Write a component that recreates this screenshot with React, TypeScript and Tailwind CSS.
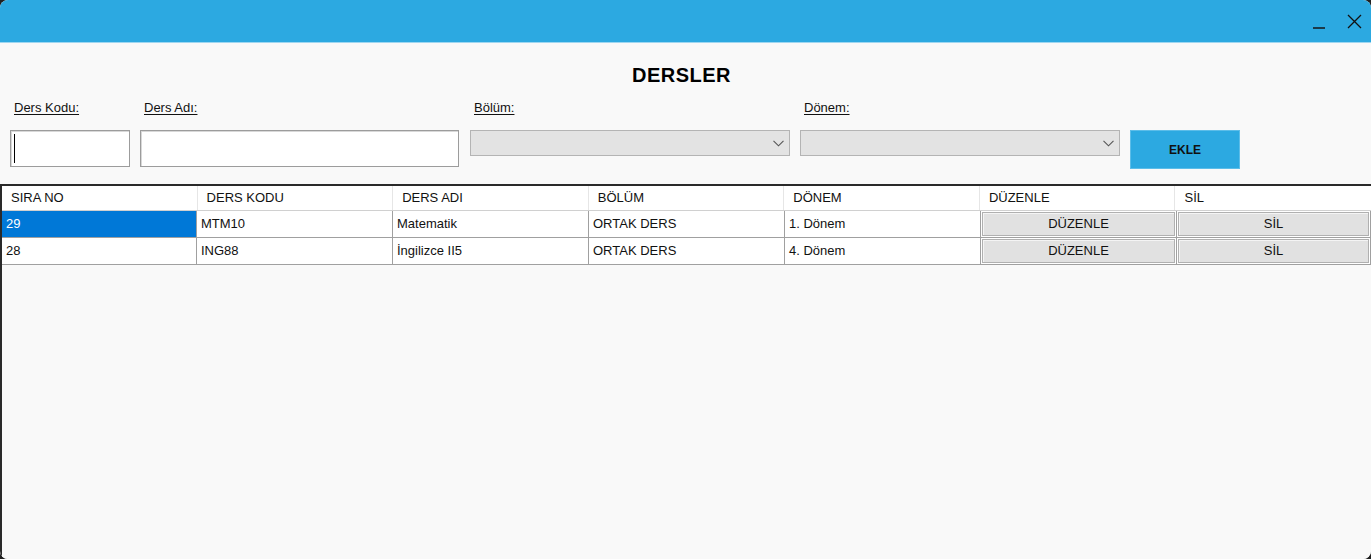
import React from "react";

const font = { fontFamily: '"Liberation Sans", Arial, sans-serif' };

const cols = ["SIRA NO", "DERS KODU", "DERS ADI", "BÖLÜM", "DÖNEM", "DÜZENLE", "SİL"];
const rows = [
  { no: "29", kod: "MTM10", ad: "Matematik", bolum: "ORTAK DERS", donem: "1. Dönem" },
  { no: "28", kod: "ING88", ad: "İngilizce II5", bolum: "ORTAK DERS", donem: "4. Dönem" },
];

function Chevron() {
  return (
    <svg width="11" height="7" viewBox="0 0 11 7" fill="none">
      <path d="M0.5 0.8 L5.5 5.8 L10.5 0.8" stroke="#555" strokeWidth="1.1" />
    </svg>
  );
}

function Combo({ w }: { w: string }) {
  return (
    <div className={`${w} h-[26px] bg-[#e3e3e3] border border-[#b4b4b4] flex items-center justify-end pr-[5px]`}>
      <Chevron />
    </div>
  );
}

function Label({ text }: { text: string }) {
  return (
    <div className="pl-1 h-4 text-[13px] leading-4 text-[#111] underline underline-offset-2 decoration-1">{text}</div>
  );
}

function GridButton({ text }: { text: string }) {
  return (
    <div className="flex-1 h-full p-px">
      <div className="w-full h-full bg-[#e1e1e1] border border-[#b0b0b0] shadow-[inset_1px_1px_0_#f4f4f4] flex items-center justify-center text-[13px] text-[#111]">
        {text}
      </div>
    </div>
  );
}

export default function App() {
  return (
    <div className="w-[1371px] h-[559px] bg-[#202020] overflow-hidden" style={font}>
      <div className="w-full h-full rounded-[8px] overflow-hidden flex flex-col bg-[#f9f9f9]">
        {/* Title bar */}
        <div className="h-[43px] shrink-0 bg-[#2ca9e1] border-b border-[#9fd7f1] flex items-start justify-end">
          <div className="w-[36px] h-[42px] flex items-start justify-center pt-[27px]">
            <div className="w-[12px] h-[1.5px] bg-[#1b3a4a]" />
          </div>
          <div className="w-[34px] h-[42px] flex items-start justify-center pt-[14px]">
            <svg width="15" height="15" viewBox="0 0 15 15">
              <path d="M1 1 L14 14 M14 1 L1 14" stroke="#111" strokeWidth="1.3" />
            </svg>
          </div>
        </div>

        {/* Title */}
        <div className="mt-[20px] h-6 flex justify-center">
          <div className="text-[20px] leading-6 font-bold tracking-[0.5px] text-black ml-[-8px]">DERSLER</div>
        </div>

        {/* Form */}
        <div className="mt-[13px] flex items-start pl-[10px]">
          <div className="w-[120px] flex flex-col">
            <Label text="Ders Kodu:" />
            <div className="mt-[14px] h-[37px] bg-white border border-[#9c9c9c] shadow-[inset_1px_1px_0_#d8d8d8] flex items-center pl-[3px]">
              <div className="w-px h-[29px] bg-black" />
            </div>
          </div>
          <div className="w-[319px] ml-[10px] flex flex-col">
            <Label text="Ders Adı:" />
            <div className="mt-[14px] h-[37px] bg-white border border-[#9c9c9c] shadow-[inset_1px_1px_0_#d8d8d8]" />
          </div>
          <div className="w-[320px] ml-[11px] flex flex-col">
            <Label text="Bölüm:" />
            <div className="mt-[14px]">
              <Combo w="w-[320px]" />
            </div>
          </div>
          <div className="w-[320px] ml-[10px] flex flex-col">
            <Label text="Dönem:" />
            <div className="mt-[14px]">
              <Combo w="w-[320px]" />
            </div>
          </div>
          <div className="ml-[10px] mt-[30px] w-[110px] h-[39px] bg-[#2ca9e1] border border-[#5cbde9] flex items-center justify-center text-[12px] font-bold text-[#111]">
            EKLE
          </div>
        </div>

        {/* Grid */}
        <div className="mt-[15px] flex-1 border-t-2 border-l-2 border-[#2a2a2a] bg-[#f9f9f9] flex flex-col">
          <div className="h-[25px] flex bg-white border-b border-[#d0d0d0]">
            {cols.map((c, i) => (
              <div
                key={c}
                className={`w-[196px] h-full flex items-center pl-[9px] text-[13px] text-[#111] ${
                  i < cols.length - 1 ? "border-r border-[#e6e6e6]" : ""
                }`}
              >
                {c}
              </div>
            ))}
          </div>
          {rows.map((r, ri) => (
            <div key={r.no} className="h-[27px] flex border-b border-[#a0a0a0]">
              <div
                className={`w-[195px] h-full flex items-center pl-[4px] text-[13px] border-r border-[#a0a0a0] ${
                  ri === 0 ? "bg-[#0078d7] text-white" : "bg-white text-[#111]"
                }`}
              >
                {r.no}
              </div>
              {[r.kod, r.ad, r.bolum, r.donem].map((v, i) => (
                <div
                  key={i}
                  className="w-[196px] h-full flex items-center pl-[4px] text-[13px] text-[#111] bg-white border-r border-[#a0a0a0]"
                >
                  {v}
                </div>
              ))}
              <div className="w-[196px] h-full flex bg-white border-r border-[#a0a0a0]">
                <GridButton text="DÜZENLE" />
              </div>
              <div className="w-[194px] h-full flex bg-white border-r border-[#a0a0a0]">
                <GridButton text="SİL" />
              </div>
            </div>
          ))}
        </div>
      </div>
    </div>
  );
}
